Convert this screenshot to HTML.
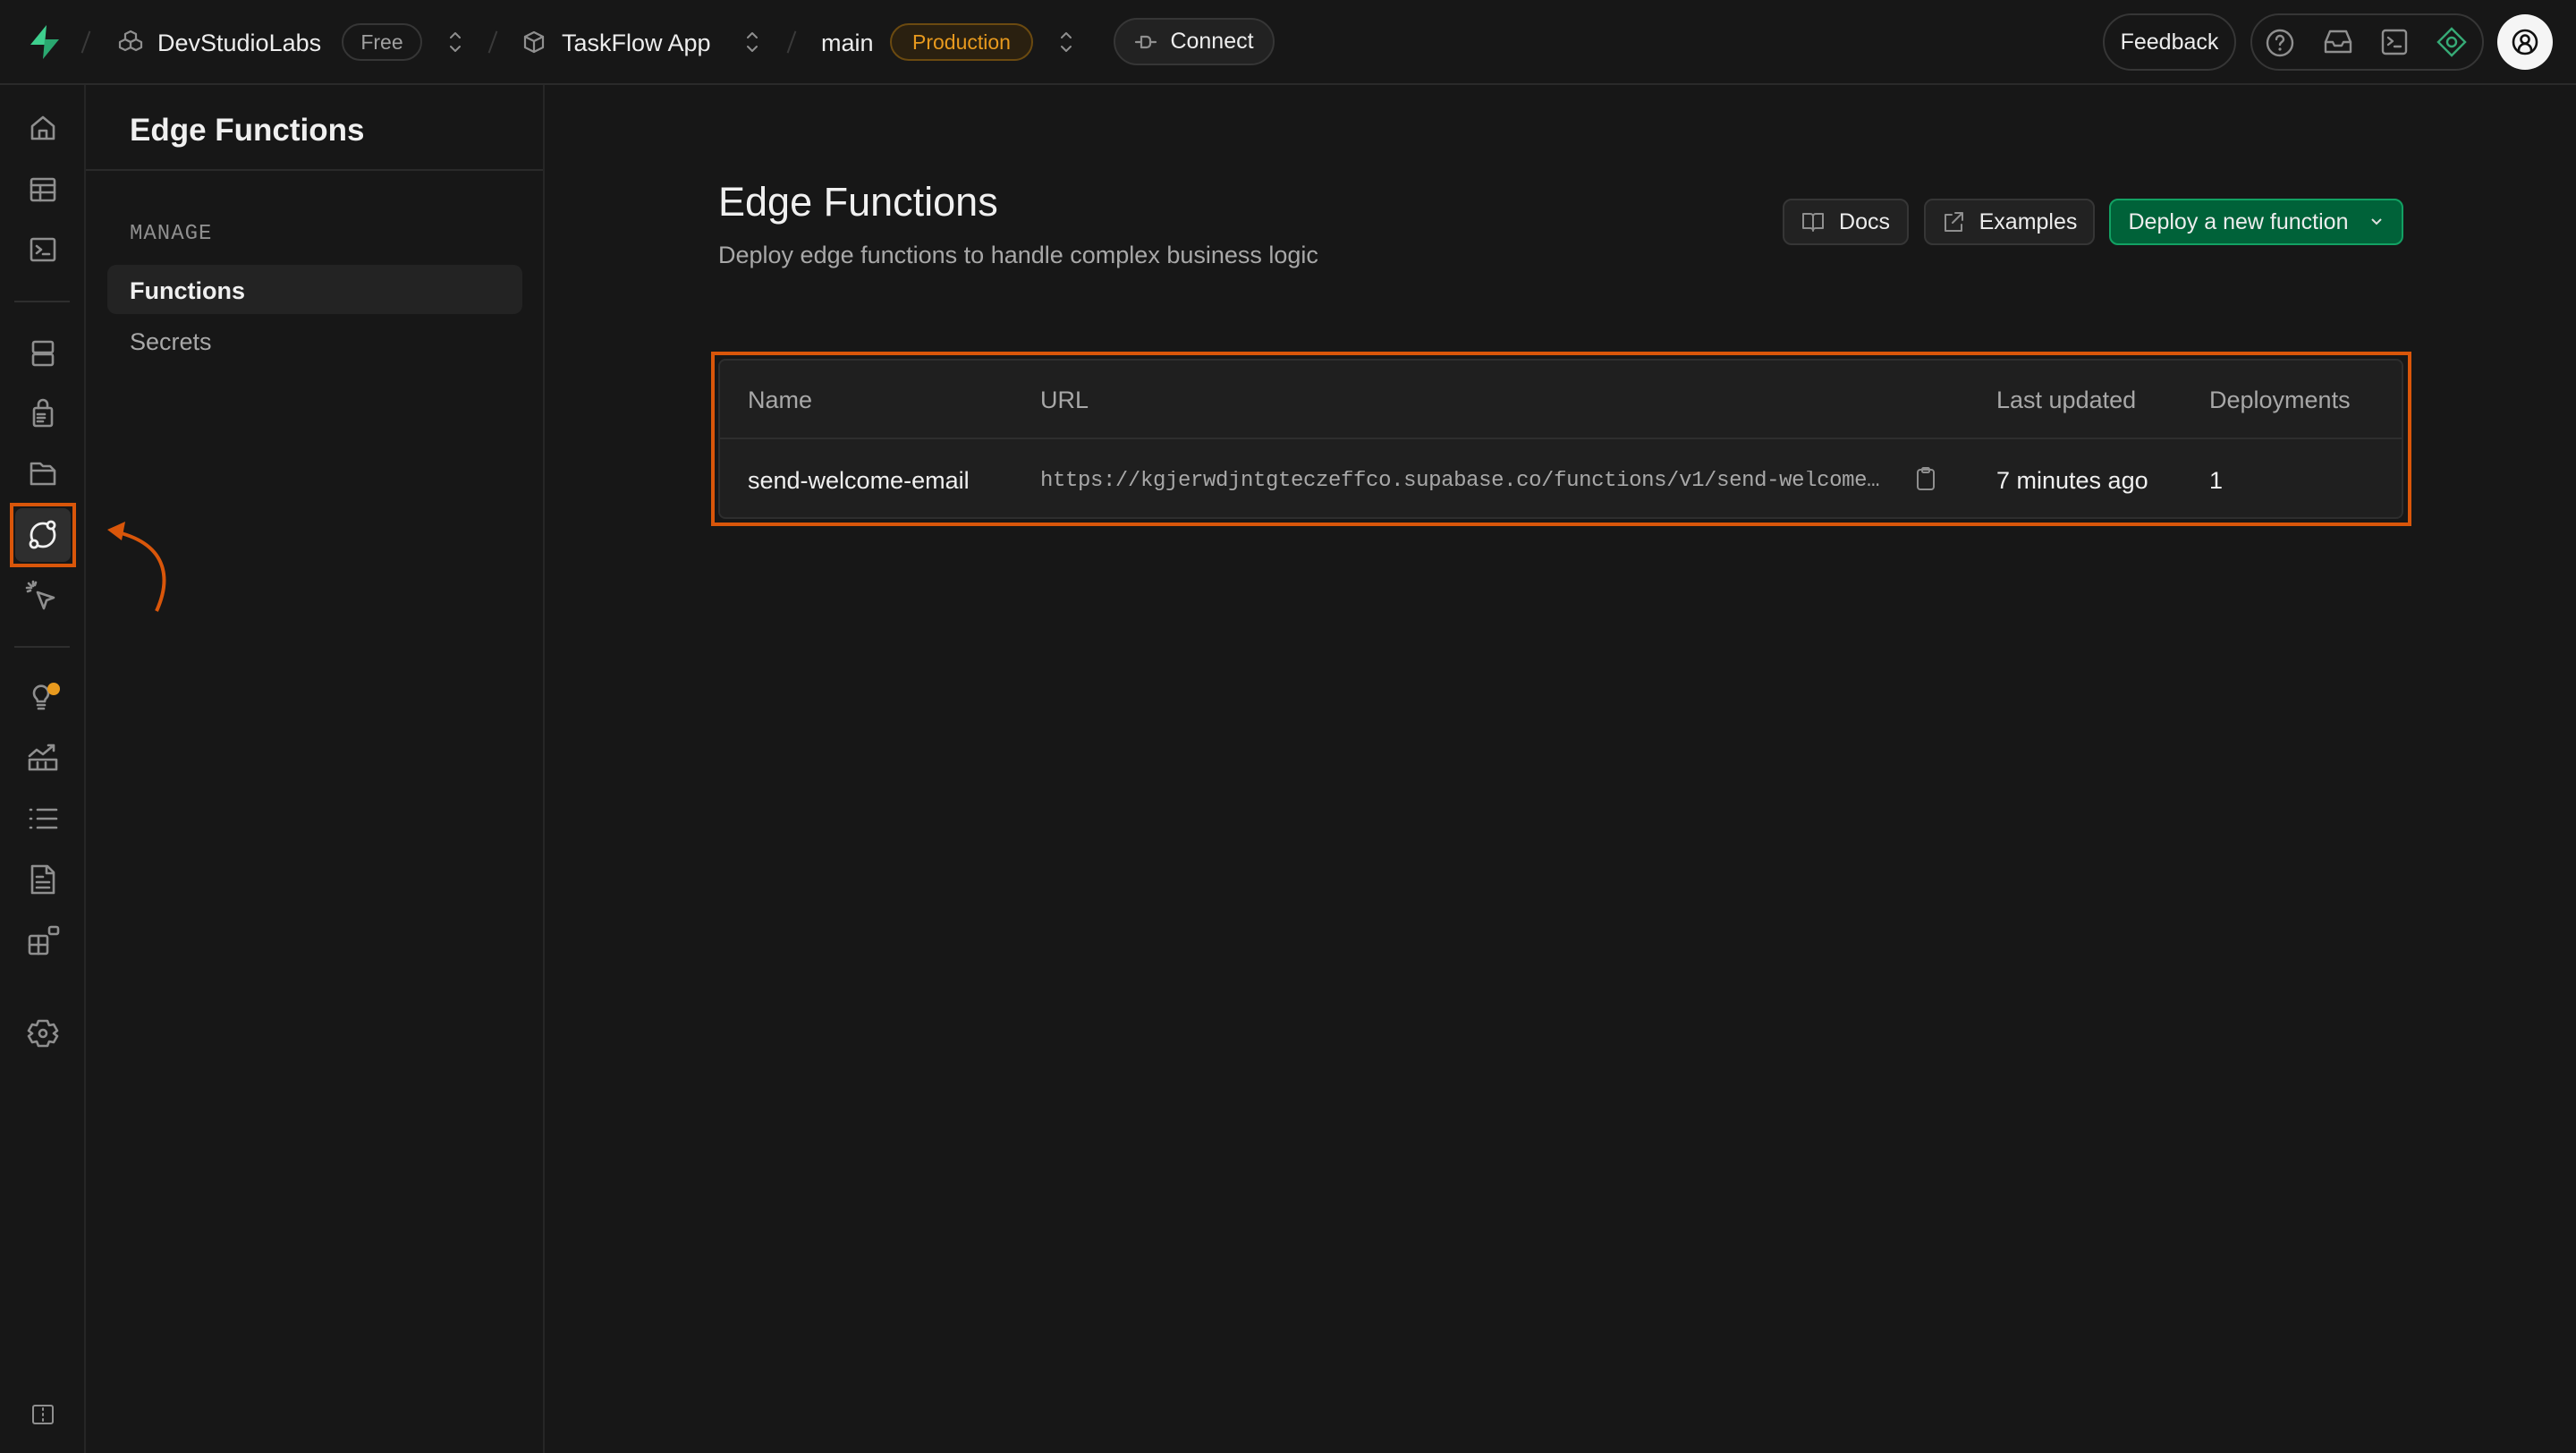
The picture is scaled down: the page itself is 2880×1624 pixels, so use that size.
<!DOCTYPE html>
<html><head><meta charset="utf-8"><style>
*{box-sizing:border-box;margin:0;padding:0}
body{width:2880px;height:1624px;background:#171717;font-family:"Liberation Sans",sans-serif;color:#ededed;position:relative;overflow:hidden}
.a{position:absolute}
.ic{stroke:#8f8f8f;fill:none;stroke-width:2.6;stroke-linecap:round;stroke-linejoin:round}
.pill{position:absolute;border:2px solid #363636;border-radius:40px;display:flex;align-items:center;justify-content:center}
.t{position:absolute;white-space:nowrap;line-height:1}
.btn{position:absolute;border:2px solid #363636;background:#222;border-radius:10px;display:flex;align-items:center;justify-content:center;gap:16px;font-size:25px;color:#ededed}
</style></head><body>
<div class="a" style="left:0;top:93px;width:2880px;height:2px;background:#2a2a2a"></div>
<svg class="a" style="left:30px;top:26px" width="40" height="42" viewBox="0 0 40 42"><path d="M22 2 L4 24 H20 Z" fill="#3ecf8e"/><path d="M18 40 L36 18 H20 Z" fill="#2aa870"/></svg>
<div class="a" style="left:95px;top:34px;width:2px;height:26px;background:#3a3a3a;transform:rotate(20deg)"></div>
<svg class="a" style="left:132px;top:33px" width="28" height="28" viewBox="0 0 28 28"><g class="ic" style="stroke-width:2.2"><path d="M14 2l6 3v6l-6 3-6-3V5z"/><path d="M8 11l6 3v6l-6 3-6-3v-6z"/><path d="M20 11l6 3v6l-6 3-6-3v-6z"/></g></svg>
<div class="t" style="left:176px;top:35px;font-size:27px;color:#ededed">DevStudioLabs</div>
<div class="pill" style="left:382px;top:26px;width:90px;height:42px;font-size:23px;color:#a0a0a0">Free</div>
<svg class="a" style="left:499px;top:32px" width="20" height="30" viewBox="0 0 20 30"><path class="ic" style="stroke-width:2" d="M5 10l5-5 5 5M5 20l5 5 5-5"/></svg>
<div class="a" style="left:550px;top:34px;width:2px;height:26px;background:#3a3a3a;transform:rotate(20deg)"></div>
<svg class="a" style="left:583px;top:33px" width="28" height="28" viewBox="0 0 28 28"><g class="ic" style="stroke-width:2.2"><path d="M14 3l10 5v12l-10 5-10-5V8z"/><path d="M4 8l10 5 10-5M14 13v12"/></g></svg>
<div class="t" style="left:628px;top:35px;font-size:27px">TaskFlow App</div>
<svg class="a" style="left:831px;top:32px" width="20" height="30" viewBox="0 0 20 30"><path class="ic" style="stroke-width:2" d="M5 10l5-5 5 5M5 20l5 5 5-5"/></svg>
<div class="a" style="left:884px;top:34px;width:2px;height:26px;background:#3a3a3a;transform:rotate(20deg)"></div>
<div class="t" style="left:918px;top:35px;font-size:27px">main</div>
<div class="pill" style="left:995px;top:26px;width:160px;height:42px;font-size:23px;color:#e89a1e;border-color:#6b4a10;background:#2a2010">Production</div>
<svg class="a" style="left:1182px;top:32px" width="20" height="30" viewBox="0 0 20 30"><path class="ic" style="stroke-width:2" d="M5 10l5-5 5 5M5 20l5 5 5-5"/></svg>
<div class="pill" style="left:1245px;top:20px;width:180px;height:53px;background:#222;gap:14px;font-size:25px;color:#ededed"><svg width="26" height="20" viewBox="0 0 26 20"><g class="ic" style="stroke-width:2.2"><path d="M2 10h6M18 10h6M8 4v12h6a4 4 0 004-4V8a4 4 0 00-4-4z"/></g></svg>Connect</div>

<div class="pill" style="left:2351px;top:15px;width:149px;height:64px;font-size:25px;color:#ededed">Feedback</div>
<div class="pill" style="left:2516px;top:15px;width:261px;height:64px"></div>
<svg class="a" style="left:2533px;top:32px" width="32" height="32" viewBox="0 0 32 32"><g class="ic" style="stroke-width:2.4"><circle cx="16" cy="16" r="14"/><path d="M12 12a4 4 0 118 0c0 3-4 3-4 6"/></g><circle cx="16" cy="23" r="1.6" fill="#8f8f8f"/></svg>
<svg class="a" style="left:2597px;top:32px" width="34" height="30" viewBox="0 0 34 30"><g class="ic" style="stroke-width:2.4"><path d="M3 15l5-12h18l5 12v11H3z"/><path d="M3 15h8l2 4h8l2-4h8"/></g></svg>
<svg class="a" style="left:2662px;top:32px" width="30" height="30" viewBox="0 0 30 30"><g class="ic" style="stroke-width:2.4"><rect x="2" y="2" width="26" height="26" rx="3"/><path d="M8 10l5 4-5 4M15 20h7"/></g></svg>
<svg class="a" style="left:2724px;top:30px" width="34" height="34" viewBox="0 0 34 34"><g fill="none" stroke="#3ecf8e" stroke-width="2.4" opacity=".8"><path d="M17 2l15 15-15 15L2 17z"/><circle cx="17" cy="17" r="5"/></g></svg>
<div class="a" style="left:2792px;top:16px;width:62px;height:62px;border-radius:50%;background:#f5f5f5"></div>
<svg class="a" style="left:2806px;top:30px" width="34" height="34" viewBox="0 0 34 34"><g fill="none" stroke="#111" stroke-width="2.6"><circle cx="17" cy="17" r="13"/><circle cx="17" cy="14" r="4.5"/><path d="M10 29v-3a7 7 0 0114 0v3"/></g></svg>

<div class="a" style="left:94px;top:95px;width:2px;height:1529px;background:#262626"></div>
<div class="a" style="left:607px;top:95px;width:2px;height:1529px;background:#262626"></div>
<div class="a" style="left:96px;top:189px;width:511px;height:2px;background:#2a2a2a"></div>
<div class="a" style="left:16px;top:336px;width:62px;height:2px;background:#2e2e2e"></div>
<div class="a" style="left:16px;top:722px;width:62px;height:2px;background:#2e2e2e"></div>

<svg class="a" style="left:32px;top:127px" width="32" height="32" viewBox="0 0 32 32"><path class="ic" d="M4 14L16 4l12 10v14H4zM12 28v-9h8v9"/></svg>
<svg class="a" style="left:32px;top:196px" width="32" height="32" viewBox="0 0 32 32"><g class="ic"><rect x="3" y="4" width="26" height="24" rx="2"/><path d="M3 11h26M3 19h26M13 11v17"/></g></svg>
<svg class="a" style="left:32px;top:263px" width="32" height="32" viewBox="0 0 32 32"><g class="ic"><rect x="3" y="4" width="26" height="24" rx="2"/><path d="M9 12l5 4-5 4M16 21h7"/></g></svg>
<svg class="a" style="left:32px;top:379px" width="32" height="32" viewBox="0 0 32 32"><g class="ic"><rect x="5" y="3" width="22" height="12" rx="2"/><rect x="5" y="17" width="22" height="12" rx="2"/></g></svg>
<svg class="a" style="left:32px;top:444px" width="32" height="34" viewBox="0 0 32 34"><g class="ic"><path d="M11 12V8a5 5 0 0110 0v4"/><rect x="6" y="12" width="20" height="20" rx="2"/><path d="M10 19h8M10 23h8M10 27h6"/></g></svg>
<svg class="a" style="left:32px;top:513px" width="32" height="32" viewBox="0 0 32 32"><g class="ic"><path d="M3 10V28h26V13H3M3 13V5h10l3 3h8l5 5"/></g></svg>
<div class="a" style="left:11px;top:562px;width:74px;height:72px;border:4px solid #d9560a"></div>
<div class="a" style="left:17px;top:568px;width:62px;height:60px;border-radius:8px;background:#2e2e2e"></div>
<svg class="a" style="left:28px;top:578px" width="40" height="40" viewBox="0 0 40 40"><g fill="none" stroke="#f0f0f0" stroke-width="2.8"><circle cx="20" cy="20" r="13"/><circle cx="29" cy="9" r="4" fill="#2e2e2e"/><circle cx="10" cy="30" r="4" fill="#2e2e2e"/></g></svg>
<svg class="a" style="left:28px;top:648px" width="36" height="36" viewBox="0 0 36 36"><g class="ic"><path d="M14 14l18 6-8 3-3 9z"/><path d="M9 2v5M2 9h5M4 4l3 3M12 3l-1 3M3 13l3-1"/></g></svg>
<svg class="a" style="left:32px;top:760px" width="40" height="34" viewBox="0 0 40 34"><g class="ic"><path d="M8 20a8 8 0 1112 0c-1 1-2 3-2 4h-8c0-1-1-3-2-4zM10 28h8M11 32h6"/></g><circle cx="28" cy="10" r="7" fill="#e89a1e"/></svg>
<svg class="a" style="left:31px;top:829px" width="34" height="34" viewBox="0 0 34 34"><g class="ic"><path d="M2 16l8-7 7 5 12-10M23 4h6v6M2 31V20h30v11zM11 31v-8M20 31v-8"/></g></svg>
<svg class="a" style="left:31px;top:899px" width="34" height="32" viewBox="0 0 34 32"><g class="ic"><path d="M11 6h21M11 16h21M11 26h21M3 6h1M3 16h1M3 26h1"/></g></svg>
<svg class="a" style="left:32px;top:965px" width="32" height="36" viewBox="0 0 32 36"><g class="ic"><path d="M4 3h17l7 7v23H4zM20 3v8h8M9 15h7M9 21h14M9 27h14"/></g></svg>
<svg class="a" style="left:31px;top:1034px" width="36" height="34" viewBox="0 0 36 34"><g class="ic"><rect x="2" y="12" width="20" height="20" rx="2"/><path d="M12 12v20M2 22h20"/><rect x="24" y="2" width="10" height="8" rx="2"/></g></svg>
<svg class="a" style="left:30px;top:1138px" width="36" height="34" viewBox="0 0 36 34"><g class="ic"><path d="M13 3h10l2 5 5-1 4 7-4 3 4 3-4 7-5-1-2 5H13l-2-5-5 1-4-7 4-3-4-3 4-7 5 1z"/><circle cx="18" cy="17" r="4"/></g></svg>
<svg class="a" style="left:35px;top:1569px" width="26" height="24" viewBox="0 0 26 24"><g class="ic" style="stroke-width:2"><rect x="2" y="2" width="22" height="20" rx="2"/><path d="M13 5v2M13 11v2M13 17v2"/></g></svg>

<svg class="a" style="left:110px;top:580px" width="90" height="110" viewBox="0 0 90 110"><path d="M65 103C80 70 80 30 22 15" fill="none" stroke="#d9560a" stroke-width="4"/><path d="M10 12L30 3 26 24z" fill="#d9560a"/></svg>

<div class="t" style="left:145px;top:128px;font-size:35px;font-weight:bold;color:#f0f0f0">Edge Functions</div>
<div class="t" style="left:145px;top:250px;font-size:24px;color:#8f8f8f;font-family:'Liberation Mono',monospace;letter-spacing:1px">MANAGE</div>
<div class="a" style="left:120px;top:296px;width:464px;height:55px;border-radius:10px;background:#232323"></div>
<div class="t" style="left:145px;top:312px;font-size:27px;font-weight:bold;color:#f0f0f0">Functions</div>
<div class="t" style="left:145px;top:369px;font-size:27px;color:#a8a8a8">Secrets</div>

<div class="t" style="left:803px;top:203px;font-size:45px;color:#f0f0f0">Edge Functions</div>
<div class="t" style="left:803px;top:272px;font-size:27px;color:#a8a8a8">Deploy edge functions to handle complex business logic</div>
<div class="btn" style="left:1993px;top:222px;width:141px;height:52px"><svg width="26" height="26" viewBox="0 0 26 26"><g class="ic" style="stroke-width:2"><path d="M2 4h8a3 3 0 013 3v16a3 3 0 00-3-3H2zM24 4h-8a3 3 0 00-3 3v16a3 3 0 013-3h8z"/></g></svg>Docs</div>
<div class="btn" style="left:2151px;top:222px;width:191px;height:52px"><svg width="26" height="26" viewBox="0 0 26 26"><g class="ic" style="stroke-width:2"><path d="M11 5H4v18h18v-7M15 3h8v8M23 3L12 14"/></g></svg>Examples</div>
<div class="btn" style="left:2358px;top:222px;width:329px;height:52px;background:#006239;border-color:#12a163;gap:24px">Deploy a new function<svg width="16" height="12" viewBox="0 0 16 12"><path d="M3 3l5 5 5-5" fill="none" stroke="#e0e0e0" stroke-width="2"/></svg></div>

<div class="a" style="left:795px;top:393px;width:1901px;height:195px;border:4px solid #d9560a"></div>
<div class="a" style="left:803px;top:401px;width:1884px;height:179px;border:2px solid #2e2e2e;border-radius:8px;background:#1f1f1f"></div>
<div class="a" style="left:805px;top:489px;width:1880px;height:2px;background:#2e2e2e"></div>
<div class="t" style="left:836px;top:434px;font-size:27px;color:#a8a8a8">Name</div>
<div class="t" style="left:1163px;top:434px;font-size:27px;color:#a8a8a8">URL</div>
<div class="t" style="left:2232px;top:434px;font-size:27px;color:#a8a8a8">Last updated</div>
<div class="t" style="left:2470px;top:434px;font-size:27px;color:#a8a8a8">Deployments</div>
<div class="t" style="left:836px;top:524px;font-size:27px;color:#f0f0f0">send-welcome-email</div>
<div class="t" style="left:1163px;top:526px;font-size:24px;color:#a8a8a8;font-family:'Liberation Mono',monospace;width:950px;overflow:hidden;text-overflow:ellipsis;letter-spacing:-0.4px">https://kgjerwdjntgteczeffco.supabase.co/functions/v1/send-welcome-email</div>
<svg class="a" style="left:2142px;top:521px" width="22" height="28" viewBox="0 0 22 28"><g class="ic" style="stroke-width:2"><rect x="2" y="4" width="18" height="22" rx="3"/><rect x="7" y="2" width="8" height="5" rx="1.5"/></g></svg>
<div class="t" style="left:2232px;top:524px;font-size:27px;color:#f0f0f0">7 minutes ago</div>
<div class="t" style="left:2470px;top:524px;font-size:27px;color:#f0f0f0">1</div>
</body></html>
